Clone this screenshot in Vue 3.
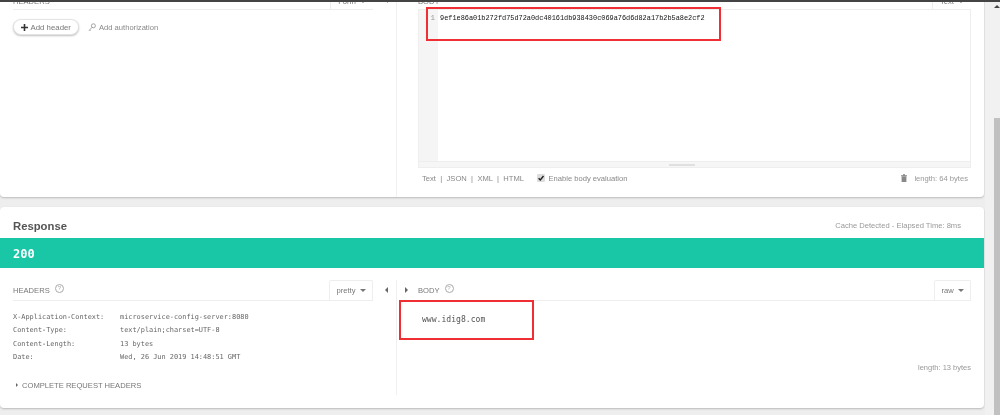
<script setup>
const headers = [
  ['X-Application-Context:', 'microservice-config-server:8080'],
  ['Content-Type:', 'text/plain;charset=UTF-8'],
  ['Content-Length:', '13 bytes'],
  ['Date:', 'Wed, 26 Jun 2019 14:48:51 GMT'],
]
const token = '9ef1e86a01b272fd75d72a0dc40161db938430c069a76d6d82a17b2b5a8e2cf2'
</script>

<template>
  <div class="page">
    <div class="topline"></div>
    <main class="content">
      <section class="card request">
        <div class="pane left">
          <div class="pane-inner">
            <div class="head clipped">
              <span class="label">HEADERS</span>
              <span class="drop">Form <i class="caret"></i></span>
            </div>
            <div class="actions">
              <button class="pill">
                <svg width="7" height="7" viewBox="0 0 7 7"><path d="M3.5 0v7M0 3.5h7" stroke="#333" stroke-width="1.6"/></svg>
                Add header
              </button>
              <span class="auth">
                <svg width="8" height="9" viewBox="0 0 8 9" fill="none" stroke="#999" stroke-width=".9"><circle cx="5.4" cy="2.8" r="2"/><path d="M4 4.3 1 7.6M1.6 7l1 1"/></svg>
                Add authorization
              </span>
            </div>
          </div>
          <i class="arrow arrow-l collapse-top"></i>
        </div>
        <div class="pane right">
          <div class="head clipped body-head">
            <span class="label">BODY</span>
            <span class="drop narrow">Text <i class="caret"></i></span>
          </div>
          <div class="editor">
            <div class="editor-main">
              <div class="gutter">1</div>
              <div class="code">{{ token }}</div>
            </div>
            <div class="hscroll"><span></span></div>
          </div>
          <div class="foot">
            <span class="types">Text <b>|</b> JSON <b>|</b> XML <b>|</b> HTML</span>
            <span class="check">
              <svg width="8" height="8" viewBox="0 0 8 8"><rect width="8" height="8" rx="1.2" fill="#ddd"/><path d="M1.6 4.2 3.3 6l3.2-4" fill="none" stroke="#222" stroke-width="1.4"/></svg>
              Enable body evaluation
            </span>
            <span class="len">
              <svg width="6" height="8" viewBox="0 0 6 8"><path d="M0 1.2h6v1H0zM2 .2h2v1H2zM.6 2.6h4.8V8H.6z" fill="#888"/></svg>
              length: 64 bytes
            </span>
          </div>
          <div class="mark mark-top"></div>
        </div>
      </section>

      <section class="card response">
        <div class="title-row">
          <h2>Response</h2>
          <span>Cache Detected - Elapsed Time: 8ms</span>
        </div>
        <div class="status">200</div>
        <div class="split">
          <div class="pane left">
            <div class="pane-inner">
              <div class="head">
                <span class="label">HEADERS <i class="help">?</i></span>
                <span class="drop tall">pretty <i class="caret"></i></span>
              </div>
              <div class="hrows">
                <div v-for="row in headers" :key="row[0]" class="hrow">
                  <span>{{ row[0] }}</span><span>{{ row[1] }}</span>
                </div>
              </div>
              <div class="complete"><i class="arrow arrow-r small"></i>COMPLETE REQUEST HEADERS</div>
            </div>
            <i class="arrow arrow-l"></i>
          </div>
          <div class="pane right rbody">
            <i class="arrow arrow-r side"></i>
            <div class="head">
              <span class="label">BODY <i class="help">?</i></span>
              <span class="drop tall raw">raw <i class="caret"></i></span>
            </div>
            <div class="out">www.idig8.com</div>
            <div class="out-len">length: 13 bytes</div>
            <div class="mark mark-bottom"></div>
          </div>
        </div>
      </section>
    </main>
    <aside class="scrollbar">
      <i class="up"></i>
      <div class="thumb"></div>
    </aside>
  </div>
</template>

<style>
html, body { margin: 0; padding: 0; overflow: hidden; }
</style>

<style scoped>
.page {
  position: relative;
  display: flex;
  width: 1000px;
  height: 415px;
  overflow: hidden;
  background: #eee;
  font-family: "Liberation Sans", Arial, sans-serif;
  color: #888;
  filter: blur(0.35px);
}
.topline {
  position: absolute;
  inset: 0 0 auto 0;
  height: 1.5px;
  background: #444;
  z-index: 3;
}
.content { width: 984px; flex: none; }
.card {
  background: #fff;
  box-shadow: 0 1px 2px rgba(0, 0, 0, .22);
}
.request {
  display: flex;
  height: 197px;
  border-radius: 0 0 4px 4px;
}
.response {
  margin-top: 10px;
  height: 201px;
  border-radius: 4px;
  display: flex;
  flex-direction: column;
}
.pane { position: relative; }
.left {
  width: 396px;
  flex: none;
  box-sizing: border-box;
  padding-left: 13px;
}
.pane-inner { width: 360px; }
.right {
  flex: 1;
  min-width: 0;
  padding: 0 13px 0 21px;
  border-left: 1px solid #f0f0f0;
  box-sizing: border-box;
}
.head {
  display: flex;
  justify-content: space-between;
  align-items: flex-end;
  height: 20px;
  border-bottom: 1px solid #eee;
  font-size: 7.6px;
}
.clipped { height: 9px; overflow: hidden; }
.clipped .label { transform: translateY(2px); }
.clipped .drop { transform: translateY(1px); }
.label { line-height: 18px; color: #777; }
.drop {
  display: flex;
  align-items: center;
  justify-content: center;
  gap: 4px;
  width: 42px;
  height: 18px;
  border-left: 1px solid #eee;
  color: #777;
}
.narrow { width: 38px; }
.tall {
  height: 20px;
  width: 44px;
  border: 1px solid #eee;
  border-bottom: 0;
  border-radius: 2px 2px 0 0;
  box-sizing: border-box;
}
.raw { width: 37px; }
.caret {
  width: 0;
  height: 0;
  border: 3px solid transparent;
  border-top-color: #777;
  border-bottom: 0;
}
.help {
  display: inline-block;
  width: 7px;
  height: 7px;
  margin-left: 3px;
  border: 1px solid #aaa;
  border-radius: 50%;
  font: 6px/7px "Liberation Sans", sans-serif;
  text-align: center;
  vertical-align: 3px;
  color: #aaa;
}
.actions {
  display: flex;
  align-items: center;
  gap: 9px;
  margin-top: 9px;
  font-size: 7.6px;
}
.pill {
  display: flex;
  align-items: center;
  justify-content: center;
  gap: 2.5px;
  width: 66px;
  height: 16px;
  padding: 0;
  border: 1px solid #e4e4e4;
  border-radius: 8px;
  background: #fff;
  box-shadow: 0 1px 2px rgba(0, 0, 0, .25);
  color: #777;
  font: inherit;
  font-size: 7.8px;
}
.auth { display: flex; align-items: center; gap: 3px; color: #888; }
.arrow { position: absolute; width: 0; height: 0; border: 3px solid transparent; }
.arrow-l { right: 8px; top: 7px; border-left: 0; border-right-color: #666; }
.arrow-r { border-right: 0; border-left-color: #666; }
.collapse-top { top: -3px; }
.side { left: 8px; top: 7px; }
.small { position: static; display: inline-block; border-width: 2.5px; border-right: 0; margin-right: 4px; }
.editor {
  height: 158px;
  border: 1px solid #eee;
  border-top: 0;
  box-sizing: border-box;
  display: flex;
  flex-direction: column;
}
.editor-main { flex: 1; display: flex; }
.gutter {
  width: 19px;
  background: #f5f5f5;
  padding-top: 3px;
  padding-right: 3px;
  box-sizing: border-box;
  text-align: right;
  font: 7.5px/10px "Liberation Mono", monospace;
  color: #999;
}
.code {
  padding: 3px 0 0 2px;
  font: 6.9px/10px "Liberation Mono", monospace;
  color: #111;
  white-space: pre;
}
.hscroll {
  height: 6px;
  background: #f6f6f6;
  border-top: 1px solid #eee;
  position: relative;
  box-sizing: border-box;
}
.hscroll span {
  position: absolute;
  left: 250px;
  top: 1.5px;
  width: 26px;
  height: 2px;
  background: #e0e0e0;
}
.foot {
  display: flex;
  align-items: center;
  height: 20px;
  padding: 0 3px 0 4px;
  font-size: 7.6px;
}
.types { word-spacing: 2.2px; color: #888; }
.types b { font-weight: 400; }
.check { display: flex; align-items: center; gap: 3.5px; margin-left: 13px; }
.len { display: flex; align-items: center; gap: 7px; margin-left: auto; color: #999; }
.mark {
  position: absolute;
  border: 2px solid #ef2f33;
  box-sizing: border-box;
  z-index: 2;
}
.mark-top { left: 29px; top: 7px; width: 295px; height: 33.5px; }
.mark-bottom { left: 2px; top: 20px; width: 135px; height: 40px; }
.title-row {
  display: flex;
  justify-content: space-between;
  align-items: center;
  height: 31px;
  padding: 0 23px 0 13px;
  box-sizing: border-box;
  font-size: 7.6px;
  color: #999;
}
h2 { margin: 6px 0 0; font-size: 11.3px; color: #555; font-weight: 700; }
.title-row span { padding-top: 6px; }
.status {
  height: 30px;
  padding-left: 13px;
  background: #19c6a6;
  color: #fff;
  font: 700 12px/32px "DejaVu Sans Mono", monospace;
}
.split { flex: 1; display: flex; padding-top: 12px; padding-bottom: 13px; }
.rbody { padding-left: 21px; }
.hrows {
  margin-top: 10px;
  font: 6.9px/13.4px "DejaVu Sans Mono", monospace;
  color: #666;
}
.hrow { display: flex; }
.hrow span:first-child { width: 107px; flex: none; }
.complete {
  display: flex;
  align-items: center;
  margin-top: 16px;
  padding-left: 3px;
  font-size: 7.6px;
  color: #777;
}
.out {
  margin-top: 12px;
  padding-left: 4px;
  font: 8.1px/12px "DejaVu Sans Mono", monospace;
  color: #555;
}
.out-len {
  margin-top: 38px;
  text-align: right;
  font-size: 7.5px;
  color: #999;
}
.scrollbar {
  position: relative;
  flex: 1;
  margin-left: 1px;
  background: #f1f1f1;
}
.up {
  position: absolute;
  left: 9px;
  top: 5px;
  border: 3px solid transparent;
  border-bottom-color: #444;
  border-top: 0;
}
.thumb {
  position: absolute;
  left: 9px;
  right: 0;
  top: 118px;
  bottom: 0;
  background: #c1c1c1;
}
</style>
